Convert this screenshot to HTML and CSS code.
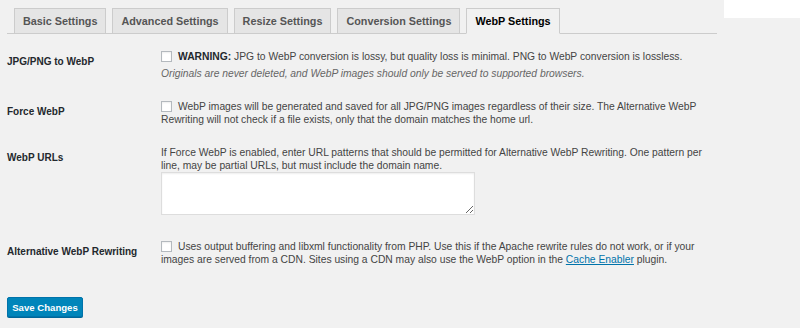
FILE: index.html
```html
<!DOCTYPE html>
<html>
<head>
<meta charset="utf-8">
<link rel="stylesheet" href="styles.css">
</head>
<body>
<div class="corner"></div>
<div class="wrap">
  <nav class="tabs">
    <span class="tab">Basic Settings</span>
    <span class="tab">Advanced Settings</span>
    <span class="tab">Resize Settings</span>
    <span class="tab">Conversion Settings</span>
    <span class="tab active">WebP Settings</span>
  </nav>
  <form class="form">
    <div class="row">
      <div class="label">JPG/PNG to WebP</div>
      <div class="field">
        <p class="line"><span class="cb"></span><b>WARNING:</b> JPG to WebP conversion is lossy, but quality loss is minimal. PNG to WebP conversion is lossless.</p>
        <p class="desc">Originals are never deleted, and WebP images should only be served to supported browsers.</p>
      </div>
    </div>
    <div class="row">
      <div class="label">Force WebP</div>
      <div class="field">
        <p class="line"><span class="cb"></span>WebP images will be generated and saved for all JPG/PNG images regardless of their size. The Alternative WebP Rewriting will not check if a file exists, only that the domain matches the home url.</p>
      </div>
    </div>
    <div class="row">
      <div class="label">WebP URLs</div>
      <div class="field">
        <p class="line">If Force WebP is enabled, enter URL patterns that should be permitted for Alternative WebP Rewriting. One pattern per line, may be partial URLs, but must include the domain name.</p>
        <textarea class="ta"></textarea>
      </div>
    </div>
    <div class="row">
      <div class="label">Alternative WebP Rewriting</div>
      <div class="field">
        <p class="line"><span class="cb"></span>Uses output buffering and libxml functionality from PHP. Use this if the Apache rewrite rules do not work, or if your images are served from a CDN. Sites using a CDN may also use the WebP option in the <a href="#">Cache Enabler</a> plugin.</p>
      </div>
    </div>
    <div class="submit">
      <button type="button" class="btn">Save Changes</button>
    </div>
  </form>
</div>
</body>
</html>
```

FILE: styles.css
```css
* { box-sizing: border-box; }
html, body {
  margin: 0;
  padding: 0;
  background: #f1f1f1;
  font-family: "Liberation Sans", Arial, sans-serif;
  font-size: 10.3px;
  color: #444;
  height: 328px;
  overflow: hidden;
}
.corner {
  position: absolute;
  top: 0;
  right: 0;
  width: 76px;
  height: 18px;
  background: #fff;
}
.wrap {
  padding: 8px 0 0 7px;
  width: 717px;
}
.tabs {
  display: flex;
  gap: 6px;
  padding-left: 7px;
  border-bottom: 1px solid #ccc;
  height: 26px;
}
.tab {
  height: 26px;
  padding: 0 8px;
  line-height: 24px;
  border: 1px solid #ccc;
  background: #e5e5e5;
  color: #555;
  font-weight: bold;
  font-size: 10.8px;
  white-space: nowrap;
}
.tab.active {
  background: #f1f1f1;
  border-bottom-color: #f1f1f1;
  color: #000;
}
.form {
  padding-top: 6px;
}
.row {
  display: grid;
  grid-template-columns: 154px 1fr;
  padding: 10px 0;
}
.label {
  font-weight: bold;
  font-size: 10px;
  color: #23282d;
  padding-top: 5px;
  line-height: 13px;
}
.field { min-width: 0; }
.line {
  margin: 0;
  line-height: 13px;
}
.desc {
  margin: 4px 0 0;
  line-height: 13px;
  font-style: italic;
  color: #666;
}
.cb {
  display: inline-block;
  width: 11px;
  height: 11px;
  border: 1px solid #b4b9be;
  background: #fff;
  box-shadow: inset 0 1px 2px rgba(0,0,0,0.07);
  vertical-align: -2px;
  margin-right: 6px;
}
b { color: #23282d; }
a { color: #0073aa; text-decoration: underline; }
.ta {
  display: block;
  width: 314px;
  height: 43px;
  margin: 0 0 5px;
  border: 1px solid #ddd;
  background: #fff;
  box-shadow: inset 0 1px 2px rgba(0,0,0,0.07);
  resize: vertical;
  font-family: inherit;
}
.submit {
  padding-top: 21px;
}
.btn {
  display: block;
  width: 76px;
  height: 20px;
  padding: 0;
  background: #0085ba;
  border: 1px solid #0073aa;
  border-radius: 2px;
  box-shadow: 0 1px 0 #006799;
  color: #fff;
  font-family: inherit;
  font-weight: bold;
  font-size: 9.6px;
}
```
